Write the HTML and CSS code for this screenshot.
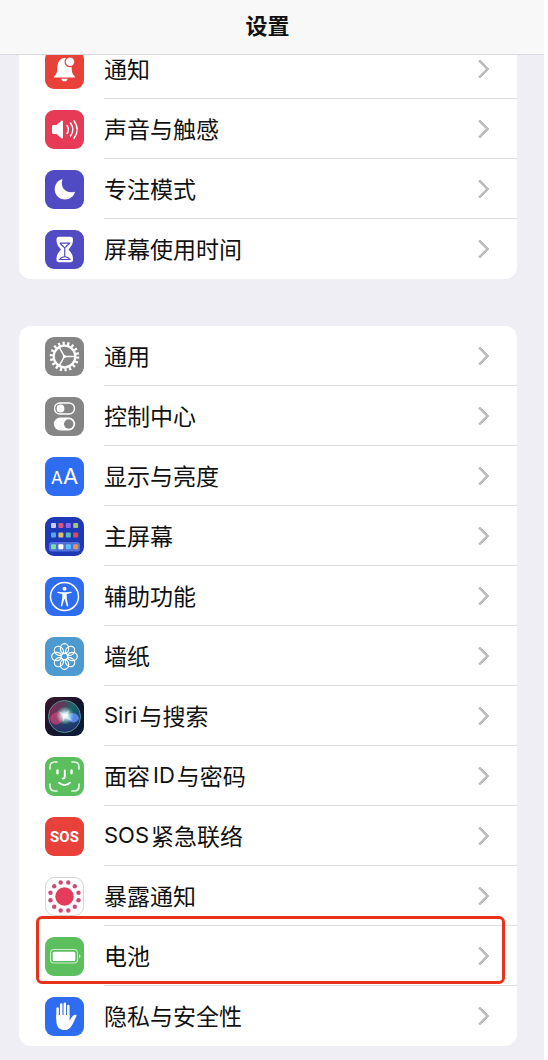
FILE: index.html
```html
<!DOCTYPE html>
<html lang="zh-CN">
<head>
<meta charset="utf-8">
<meta name="viewport" content="width=device-width, initial-scale=1">
<title>设置</title>
<link rel="stylesheet" href="styles.css">
</head>
<body>
<div class="screen">
<header class="navbar"><h1 class="title">设置</h1></header>
<main class="content">
<ul class="group group-scrolled">
<li class="row"><a class="link" href="#notifications">
<svg class="icon" viewBox="0 0 39 39"><rect width="39" height="39" rx="9" fill="#e8413a"/><path d="M9 27.500c0-2 3.200-3 3.200-7.500 0-6.500 2-12 7.300-12s7.300 5.500 7.300 12c0 4.500 3.200 5.500 3.200 7.500z" fill="#fff"/><path d="M16.200 28.700h6.600c-.5 1.700-1.600 2.600-3.300 2.600s-2.800-.9-3.300-2.600z" fill="#fff"/><circle cx="25" cy="11.800" r="4.900" fill="#fff" stroke="#e8413a" stroke-width="1.200"/></svg>
<span class="label">通知</span></a></li>
<li class="row"><a class="link" href="#sounds">
<svg class="icon" viewBox="0 0 39 39"><rect width="39" height="39" rx="9" fill="#e63a56"/><path d="M7 16.500c0-.9.500-1.500 1.500-1.500h3l5-4.300c.8-.6 1.500-.2 1.500.7v16.200c0 .9-.7 1.300-1.500.7l-5-4.300h-3c-1 0-1.500-.6-1.500-1.500z" fill="#fff"/><path d="M22 15.500c1.700 2.400 1.700 5.600 0 8M25.500 13c2.900 4 2.900 9 0 13M29 10.700c4 5.500 4 12.100 0 17.600" fill="none" stroke="#fff" stroke-width="1.500" stroke-linecap="round"/></svg>
<span class="label">声音与触感</span></a></li>
<li class="row"><a class="link" href="#focus">
<svg class="icon" viewBox="0 0 39 39"><rect width="39" height="39" rx="9" fill="#504bc3"/><path d="M16.700 9.200c.5-.2.900.2.700.7-2.600 7 3.600 14.200 11.600 12 .6-.2 1 .3.800.8-1.500 4-5.300 6.700-9.800 6.700-5.900 0-10.300-4.500-10.300-10.200 0-4.600 2.800-8.500 7-10z" fill="#fff"/></svg>
<span class="label">专注模式</span></a></li>
<li class="row"><a class="link" href="#screen-time">
<svg class="icon" viewBox="0 0 39 39"><rect width="39" height="39" rx="9" fill="#504bc3"/><path d="M14 6.800h11.500c1.700 0 2.500 1 2.500 2.700 0 5.500-2.300 7-4.500 10 2.200 3 4.500 4.500 4.500 10 0 1.700-.8 2.700-2.500 2.700H14c-1.700 0-2.500-1-2.500-2.700 0-5.500 2.300-7 4.500-10-2.200-3-4.500-4.500-4.500-10 0-1.700.8-2.700 2.500-2.700z" fill="#fff"/><path d="M15 13.200h9.500c-.8 1.600-3.200 2.600-4.100 4.300M15 13.200c.8 1.600 3.200 2.600 4.100 4.300M19.750 17v9.500M14.500 29.500c1.200-2 3.600-2.600 5.250-3 1.650.4 4.050 1 5.250 3z" fill="none" stroke="#504bc3" stroke-width="1.200"/></svg>
<span class="label">屏幕使用时间</span></a></li>
</ul>

<ul class="group">
<li class="row"><a class="link" href="#general">
<svg class="icon" viewBox="0 0 39 39"><rect width="39" height="39" rx="9" fill="#858585"/><circle cx="19.500" cy="19.500" r="13.200" fill="none" stroke="#fff" stroke-width="3.200" stroke-dasharray="2.200 2.407"/><circle cx="19.500" cy="19.500" r="10.800" fill="none" stroke="#fff" stroke-width="2.200"/><path d="M19.500 19.500H30M19.500 19.500l-5.300-9.200M19.500 19.500l-5.300 9.200" stroke="#fff" stroke-width="1.500"/><circle cx="19.500" cy="19.500" r="1.600" fill="#fff"/></svg>
<span class="label">通用</span></a></li>
<li class="row"><a class="link" href="#control-center">
<svg class="icon" viewBox="0 0 39 39"><rect width="39" height="39" rx="9" fill="#858585"/><rect x="9.500" y="6" width="20" height="11" rx="5.500" fill="none" stroke="#fff" stroke-width="1.400"/><circle cx="15.500" cy="11.500" r="3.900" fill="#fff"/><rect x="8.800" y="20.500" width="21.400" height="13" rx="6.500" fill="#fff"/><circle cx="23.700" cy="27" r="4.700" fill="#858585"/></svg>
<span class="label">控制中心</span></a></li>
<li class="row"><a class="link" href="#display">
<svg class="icon icon-text" viewBox="0 0 39 39"><rect width="39" height="39" rx="9" fill="#2e6cf0"/><text x="6" y="27" font-size="17">A</text><text x="18" y="27" font-size="22">A</text></svg>
<span class="label">显示与亮度</span></a></li>
<li class="row"><a class="link" href="#home-screen">
<svg class="icon" viewBox="0 0 39 39"><rect width="39" height="39" rx="9" fill="#1d39b8"/><rect x="4" y="25" width="31" height="9.500" rx="2.500" fill="#5070d8"/><g><rect x="6" y="6" width="5" height="5" rx="1" fill="#c8cff0"/><rect x="13.400" y="6" width="5" height="5" rx="1" fill="#d8577d"/><rect x="20.800" y="6" width="5" height="5" rx="1" fill="#9267f0"/><rect x="28.200" y="6" width="5" height="5" rx="1" fill="#9fc77c"/><rect x="6" y="15.500" width="5" height="5" rx="1" fill="#50a9f4"/><rect x="13.400" y="15.500" width="5" height="5" rx="1" fill="#e2bd65"/><rect x="20.800" y="15.500" width="5" height="5" rx="1" fill="#56bdb8"/><rect x="28.200" y="15.500" width="5" height="5" rx="1" fill="#d94a52"/><rect x="6" y="27.200" width="5" height="5" rx="1" fill="#78e299"/><rect x="13.400" y="27.200" width="5" height="5" rx="1" fill="#fff"/><rect x="20.800" y="27.200" width="5" height="5" rx="1" fill="#5bc0fa"/><rect x="28.200" y="27.200" width="5" height="5" rx="1" fill="#dc965f"/></g></svg>
<span class="label">主屏幕</span></a></li>
<li class="row"><a class="link" href="#accessibility">
<svg class="icon" viewBox="0 0 39 39"><rect width="39" height="39" rx="9" fill="#2e6cf0"/><circle cx="19.500" cy="19.500" r="14" fill="none" stroke="#fff" stroke-width="1.500"/><circle cx="19.500" cy="11.800" r="2" fill="#fff"/><path d="M13 14.700l4.800.6h3.400l4.800-.6c.9-.1 1.100 1.100.2 1.300l-4.500 1v4.200l1.500 7.300c.2 1-1 1.300-1.400.4L19.700 22h-.4l-2.100 6.900c-.4.900-1.600.6-1.400-.4l1.500-7.300V17l-4.500-1c-.9-.2-.7-1.400.2-1.300z" fill="#fff"/></svg>
<span class="label">辅助功能</span></a></li>
<li class="row"><a class="link" href="#wallpaper">
<svg class="icon" viewBox="0 0 39 39"><rect width="39" height="39" rx="9" fill="#4c9ad0"/><g fill="none" stroke="#fff" stroke-width="1.200"><circle cx="19.500" cy="19.500" r="3.300"/><ellipse cx="19.500" cy="11.600" rx="4.200" ry="4.900"/><ellipse cx="19.500" cy="11.600" rx="4.200" ry="4.900" transform="rotate(45 19.500 19.500)"/><ellipse cx="19.500" cy="11.600" rx="4.200" ry="4.900" transform="rotate(90 19.500 19.500)"/><ellipse cx="19.500" cy="11.600" rx="4.200" ry="4.900" transform="rotate(135 19.500 19.500)"/><ellipse cx="19.500" cy="11.600" rx="4.200" ry="4.900" transform="rotate(180 19.500 19.500)"/><ellipse cx="19.500" cy="11.600" rx="4.200" ry="4.900" transform="rotate(225 19.500 19.500)"/><ellipse cx="19.500" cy="11.600" rx="4.200" ry="4.900" transform="rotate(270 19.500 19.500)"/><ellipse cx="19.500" cy="11.600" rx="4.200" ry="4.900" transform="rotate(315 19.500 19.500)"/></g></svg>
<span class="label">墙纸</span></a></li>
<li class="row"><a class="link" href="#siri">
<svg class="icon" viewBox="0 0 39 39"><defs><linearGradient id="siri-bg" x1="0" y1="0" x2="1" y2="1"><stop offset="0" stop-color="#3d1630"/><stop offset=".5" stop-color="#15142c"/><stop offset="1" stop-color="#081f3a"/></linearGradient><linearGradient id="siri-orb" x1="0" y1=".2" x2="1" y2=".6"><stop offset="0" stop-color="#8c2458"/><stop offset=".4" stop-color="#54405c"/><stop offset=".65" stop-color="#1d6468"/><stop offset="1" stop-color="#124880"/></linearGradient><linearGradient id="siri-shade" x1="0" y1="0" x2="0" y2="1"><stop offset=".5" stop-color="#23286b" stop-opacity="0"/><stop offset="1" stop-color="#23286b"/></linearGradient><radialGradient id="siri-glow"><stop offset="0" stop-color="#fff"/><stop offset=".3" stop-color="#e8fbff" stop-opacity=".85"/><stop offset="1" stop-color="#9fe" stop-opacity="0"/></radialGradient></defs><rect width="39" height="39" rx="9" fill="url(#siri-bg)"/><circle cx="19.500" cy="19.500" r="16" fill="url(#siri-orb)"/><circle cx="19.500" cy="19.500" r="16" fill="url(#siri-shade)" stroke="#50958f" stroke-width="1"/><path d="M5 22c2-8 9-9 15-2 5-6 12-5 14 1-2 6-9 6-14 0-5 8-12 9-15 1z" fill="#e3427b" opacity=".6"/><path d="M20 20c5-5 12-5 14 1-2 6-9 6-14-1z" fill="#4b8ff0" opacity=".9"/><circle cx="20" cy="18.500" r="9" fill="url(#siri-glow)"/><path d="M13 14l7 3 4-4-1 6 5 5-8-3-2 4v-6z" fill="#fff" opacity=".5"/></svg>
<span class="label"><span class="latin">Siri</span>与搜索</span></a></li>
<li class="row"><a class="link" href="#face-id">
<svg class="icon" viewBox="0 0 39 39"><rect width="39" height="39" rx="9" fill="#5abf5c"/><g fill="none" stroke="#fff" stroke-linecap="round"><path d="M5 12v-2c0-3 2-5 5-5h2M27 5h2c3 0 5 2 5 5v2M34 27v2c0 3-2 5-5 5h-2M12 34h-2c-3 0-5-2-5-5v-2" stroke-width="1.700" opacity=".85"/><path d="M12.500 13.500v2.700M26.500 13.500v2.700" stroke-width="2.400"/><path d="M19.800 13.500v6c0 1.500-.6 2.100-2 2.100M14 25.700c3 3.200 8 3.200 11 0" stroke-width="1.900"/></g></svg>
<span class="label">面容<span class="latin latin-inner">ID</span>与密码</span></a></li>
<li class="row"><a class="link" href="#sos">
<svg class="icon icon-sos" viewBox="0 0 39 39"><rect width="39" height="39" rx="9" fill="#e8413a"/><text x="19.500" y="25" text-anchor="middle">SOS</text></svg>
<span class="label"><span class="latin">SOS</span>紧急联络</span></a></li>
<li class="row"><a class="link" href="#exposure">
<svg class="icon" viewBox="0 0 39 39"><rect x=".5" y=".5" width="38" height="38" rx="9" fill="#fff" stroke="#d5d5d8"/><circle cx="19.500" cy="19.500" r="9.200" fill="#e43c5b"/><g fill="#cf4a74"><circle cx="23.300" cy="5.500" r="2.200"/><circle cx="29.800" cy="9.200" r="2.200"/><circle cx="33.500" cy="15.700" r="2.200"/><circle cx="33.500" cy="23.300" r="2.200"/><circle cx="29.800" cy="29.800" r="2.200"/><circle cx="23.300" cy="33.500" r="2.200"/><circle cx="15.700" cy="33.500" r="2.200"/><circle cx="9.200" cy="29.800" r="2.200"/><circle cx="5.500" cy="23.300" r="2.200"/><circle cx="5.500" cy="15.700" r="2.200"/><circle cx="9.200" cy="9.200" r="2.200"/><circle cx="15.700" cy="5.500" r="2.200"/></g></svg>
<span class="label">暴露通知</span></a></li>
<li class="row highlighted"><a class="link" href="#battery">
<svg class="icon" viewBox="0 0 39 39"><rect width="39" height="39" rx="9" fill="#5abf5c"/><rect x="5.500" y="12.500" width="27" height="13.500" rx="3.500" fill="none" stroke="#fff" stroke-opacity=".7" stroke-width="1.100"/><rect x="7.700" y="14.700" width="22.600" height="9.200" rx="1.500" fill="#fff"/><path d="M34 17.200c2 .6 2 3.600 0 4.200z" fill="#fff" fill-opacity=".7"/></svg>
<span class="label">电池</span></a></li>
<li class="row"><a class="link" href="#privacy">
<svg class="icon" viewBox="0 0 39 39"><rect width="39" height="39" rx="9" fill="#2e6cf0"/><path d="M12.600 22V11.500M16.200 20V7.500M19.800 20V6.800M23.300 20V9" fill="none" stroke="#fff" stroke-width="2.500" stroke-linecap="round"/><path d="M11.350 18h13.200v5.500c1.300-1.300 2.300-4 4-5.200 1.300-.8 3.500-.7 3 .6-1.800 3.300-3 7.300-5.200 10.300-1.900 2.600-4.200 3.900-7.300 3.900-5 0-7.700-4-7.700-9.300z" fill="#fff"/></svg>
<span class="label">隐私与安全性</span></a></li>
</ul>
</main>
</div>
</body>
</html>
```
FILE: styles.css
```css
* {
  box-sizing: border-box;
}

body {
  margin: 0;
  padding-right: 4px;
  background: #fff;
  color: #111;
  font-family: "Noto Sans CJK SC", sans-serif;
}

.screen {
  min-height: 100vh;
  background: #efeef4;
}

.navbar {
  display: flex;
  align-items: center;
  justify-content: center;
  height: 55px;
  padding: 0 9px 6px 0;
  background: #f8f8f8;
  border-bottom: 1px solid #dadade;
}

.title {
  margin: 0;
  font-size: 22px;
  line-height: 32px;
  font-weight: 700;
}

.content {
  display: flex;
  flex-direction: column;
  gap: 47px;
  padding: 0 27px 15px 19px;
  overflow: hidden;
}

.group {
  margin: 0;
  padding: 0;
  list-style: none;
  background: #fff;
  border-radius: 12px;
}

/* The first group is partly scrolled under the navigation bar. */
.group-scrolled {
  margin-top: -16px;
}

.row {
  position: relative;
}

.link {
  display: flex;
  align-items: center;
  gap: 20px;
  padding-left: 26px;
  color: inherit;
  text-decoration: none;
}

.icon {
  flex: none;
  width: 39px;
  height: 39px;
}

.label {
  display: flex;
  flex: 1;
  align-items: center;
  height: 60px;
  padding: 0 30px 2px 0;
  border-bottom: 1px solid #dcdcde;
  font-size: 23px;
  line-height: 32px;
}

.row:last-child .label {
  border-bottom-color: transparent;
}

.label::after {
  content: "";
  width: 11px;
  height: 11px;
  margin: 2px 0 0 auto;
  border: solid #bcbcbf;
  border-width: 3px 3px 0 0;
  border-radius: 1px;
  transform: rotate(45deg);
}

.latin {
  margin-right: 2px;
  font-family: Inter, sans-serif;
  font-size: 22px;
}

.latin-inner {
  margin-left: 3px;
}

.icon-text text {
  fill: #fff;
  font-family: Inter, sans-serif;
}

.icon-sos text {
  fill: #fff;
  font-family: Roboto, sans-serif;
  font-size: 15px;
  font-weight: 700;
}

.highlighted::after {
  content: "";
  position: absolute;
  inset: -10px 12px 2px 17px;
  border: 3px solid #e8321c;
  border-radius: 6px;
  pointer-events: none;
}
```
